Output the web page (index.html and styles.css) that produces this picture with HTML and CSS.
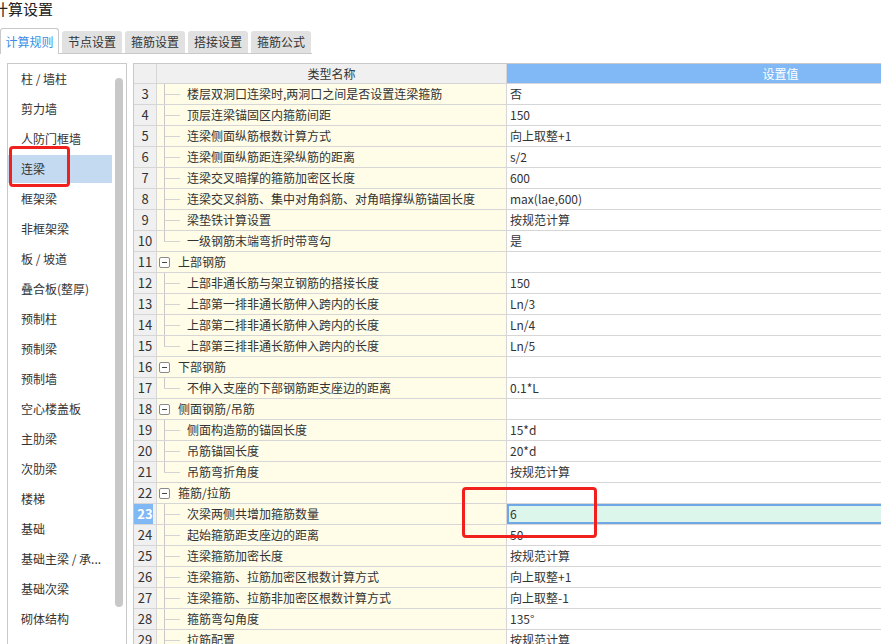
FILE: index.html
```html
<!DOCTYPE html>
<html lang="zh-CN">
<head>
<meta charset="utf-8">
<title>计算设置</title>
<link rel="stylesheet" href="styles.css">
</head>
<body>
<div class="title">计算设置</div>
<div class="tabs">
  <div class="tab active">计算规则</div>
  <div class="tab">节点设置</div>
  <div class="tab">箍筋设置</div>
  <div class="tab">搭接设置</div>
  <div class="tab">箍筋公式</div>
</div>
<div class="content">
  <div class="sidebar">
    <ul class="list">
      <li>柱 / 墙柱</li>
      <li>剪力墙</li>
      <li>人防门框墙</li>
      <li class="sel">连梁</li>
      <li>框架梁</li>
      <li>非框架梁</li>
      <li>板 / 坡道</li>
      <li>叠合板(整厚)</li>
      <li>预制柱</li>
      <li>预制梁</li>
      <li>预制墙</li>
      <li>空心楼盖板</li>
      <li>主肋梁</li>
      <li>次肋梁</li>
      <li>楼梯</li>
      <li>基础</li>
      <li>基础主梁 / 承...</li>
      <li>基础次梁</li>
      <li>砌体结构</li>
    </ul>
    <div class="scroll"><div class="thumb"></div></div>
    <div class="mark mark-side"></div>
  </div>
  <div class="grid-wrap">
    <div class="row head"><div class="c num"></div><div class="c name">类型名称</div><div class="c val">设置值</div></div>
    <div class="row"><div class="c num">3</div><div class="c name"><span class="branch"></span>楼层双洞口连梁时,两洞口之间是否设置连梁箍筋</div><div class="c val">否</div></div>
    <div class="row"><div class="c num">4</div><div class="c name"><span class="branch"></span>顶层连梁锚固区内箍筋间距</div><div class="c val">150</div></div>
    <div class="row"><div class="c num">5</div><div class="c name"><span class="branch"></span>连梁侧面纵筋根数计算方式</div><div class="c val">向上取整+1</div></div>
    <div class="row"><div class="c num">6</div><div class="c name"><span class="branch"></span>连梁侧面纵筋距连梁纵筋的距离</div><div class="c val">s/2</div></div>
    <div class="row"><div class="c num">7</div><div class="c name"><span class="branch"></span>连梁交叉暗撑的箍筋加密区长度</div><div class="c val">600</div></div>
    <div class="row"><div class="c num">8</div><div class="c name"><span class="branch"></span>连梁交叉斜筋、集中对角斜筋、对角暗撑纵筋锚固长度</div><div class="c val">max(lae,600)</div></div>
    <div class="row"><div class="c num">9</div><div class="c name"><span class="branch"></span>梁垫铁计算设置</div><div class="c val">按规范计算</div></div>
    <div class="row"><div class="c num">10</div><div class="c name"><span class="branch last"></span>一级钢筋末端弯折时带弯勾</div><div class="c val">是</div></div>
    <div class="row"><div class="c num">11</div><div class="c name group"><span class="box"></span>上部钢筋</div><div class="c val"></div></div>
    <div class="row"><div class="c num">12</div><div class="c name"><span class="branch"></span>上部非通长筋与架立钢筋的搭接长度</div><div class="c val">150</div></div>
    <div class="row"><div class="c num">13</div><div class="c name"><span class="branch"></span>上部第一排非通长筋伸入跨内的长度</div><div class="c val">Ln/3</div></div>
    <div class="row"><div class="c num">14</div><div class="c name"><span class="branch"></span>上部第二排非通长筋伸入跨内的长度</div><div class="c val">Ln/4</div></div>
    <div class="row"><div class="c num">15</div><div class="c name"><span class="branch last"></span>上部第三排非通长筋伸入跨内的长度</div><div class="c val">Ln/5</div></div>
    <div class="row"><div class="c num">16</div><div class="c name group"><span class="box"></span>下部钢筋</div><div class="c val"></div></div>
    <div class="row"><div class="c num">17</div><div class="c name"><span class="branch last"></span>不伸入支座的下部钢筋距支座边的距离</div><div class="c val">0.1*L</div></div>
    <div class="row"><div class="c num">18</div><div class="c name group"><span class="box"></span>侧面钢筋/吊筋</div><div class="c val"></div></div>
    <div class="row"><div class="c num">19</div><div class="c name"><span class="branch"></span>侧面构造筋的锚固长度</div><div class="c val">15*d</div></div>
    <div class="row"><div class="c num">20</div><div class="c name"><span class="branch"></span>吊筋锚固长度</div><div class="c val">20*d</div></div>
    <div class="row"><div class="c num">21</div><div class="c name"><span class="branch last"></span>吊筋弯折角度</div><div class="c val">按规范计算</div></div>
    <div class="row"><div class="c num">22</div><div class="c name group"><span class="box"></span>箍筋/拉筋</div><div class="c val"></div></div>
    <div class="row cur"><div class="c num">23</div><div class="c name"><span class="branch"></span>次梁两侧共增加箍筋数量</div><div class="c val">6</div></div>
    <div class="row"><div class="c num">24</div><div class="c name"><span class="branch"></span>起始箍筋距支座边的距离</div><div class="c val">50</div></div>
    <div class="row"><div class="c num">25</div><div class="c name"><span class="branch"></span>连梁箍筋加密长度</div><div class="c val">按规范计算</div></div>
    <div class="row"><div class="c num">26</div><div class="c name"><span class="branch"></span>连梁箍筋、拉筋加密区根数计算方式</div><div class="c val">向上取整+1</div></div>
    <div class="row"><div class="c num">27</div><div class="c name"><span class="branch"></span>连梁箍筋、拉筋非加密区根数计算方式</div><div class="c val">向上取整-1</div></div>
    <div class="row"><div class="c num">28</div><div class="c name"><span class="branch"></span>箍筋弯勾角度</div><div class="c val">135°</div></div>
    <div class="row"><div class="c num">29</div><div class="c name"><span class="branch"></span>拉筋配置</div><div class="c val">按规范计算</div></div>
    <div class="mark mark-grid"></div>
  </div>
</div>
</body>
</html>
```
FILE: styles.css
```css
html, body {
  margin: 0;
  padding: 0;
  background: #fff;
}
body {
  width: 881px;
  height: 644px;
  overflow: hidden;
  font-family: "Noto Sans CJK SC", "Microsoft YaHei", sans-serif;
  font-size: 12px;
  color: #333;
}

.title {
  height: 18px;
  line-height: 18px;
  font-size: 15px;
  margin-left: -7px;
  color: #222;
}

.tabs {
  display: flex;
  align-items: flex-end;
  gap: 3px;
  margin-top: 10px;
  width: 312px;
  height: 25px;
  border-bottom: 1px solid #c9c9c9;
}
.tab {
  box-sizing: border-box;
  width: 60px;
  height: 22px;
  line-height: 21px;
  text-align: center;
  background: #e1e1e1;
  border-radius: 3px 3px 0 0;
  color: #333;
}
.tab.active {
  width: 59px;
  height: 26px;
  line-height: 26px;
  margin-bottom: -1px;
  background: #fff;
  border: 1px solid #c9c9c9;
  border-bottom: none;
  border-radius: 3px 3px 0 0;
  color: #3a8ee6;
}

.content {
  display: flex;
  margin-top: 9px;
}

.sidebar {
  position: relative;
  display: flex;
  flex: none;
  box-sizing: border-box;
  width: 120px;
  height: 600px;
  margin-left: 7px;
  border: 1px solid #c9c9c9;
}
.list {
  list-style: none;
  margin: 0;
  padding: 0;
  width: 104px;
}
.list li {
  height: 28px;
  line-height: 28px;
  margin: 1px 0;
  padding-left: 13px;
  white-space: nowrap;
  overflow: hidden;
}
.list li + li {
  margin-top: 2px;
}
.list li.sel {
  background: #c4daf1;
}
.scroll {
  width: 14px;
  padding-top: 14px;
}
.thumb {
  width: 8px;
  height: 529px;
  margin-left: 3px;
  background: #c8c8c8;
  border-radius: 4px;
}

.mark {
  position: absolute;
  box-sizing: border-box;
  border: 3px solid #f0201c;
  border-radius: 4px;
}
.mark-side {
  left: 1px;
  top: 82px;
  width: 61px;
  height: 41px;
}
.mark-grid {
  left: 328px;
  top: 423px;
  width: 135px;
  height: 51px;
}

.grid-wrap {
  position: relative;
  flex: none;
  margin-left: 6px;
  border-left: 1px solid #c9c9c9;
  border-top: 1px solid #c9c9c9;
}
.row {
  display: flex;
  height: 21px;
}
.c {
  box-sizing: border-box;
  height: 21px;
  line-height: 20px;
  border-right: 1px solid #d6d6d6;
  border-bottom: 1px solid #d6d6d6;
  white-space: nowrap;
  overflow: hidden;
}
.num {
  width: 23px;
  background: #f0f0f0;
  text-align: center;
  font-size: 13px;
}
.name {
  display: flex;
  align-items: center;
  width: 350px;
  padding-left: 7px;
  background: #fffde8;
}
.val {
  width: 548px;
  padding-left: 3px;
  background: #fff;
}

.head {
  height: 20px;
}
.head .c {
  height: 20px;
  line-height: 19px;
}
.head .name {
  justify-content: center;
  padding-left: 0;
  background: #f0f0f0;
}
.head .val {
  padding-left: 0;
  text-align: center;
  background: #80b9f6;
  color: #fff;
}

.branch {
  align-self: stretch;
  flex: none;
  width: 16px;
  margin-right: 7px;
  background:
    linear-gradient(#c8c8c8, #c8c8c8) 0 0 / 1px 100% no-repeat,
    linear-gradient(#d4d4d4, #d4d4d4) 0 50% / 100% 1px no-repeat;
}
.branch.last {
  background:
    linear-gradient(#c8c8c8, #c8c8c8) 0 0 / 1px 50% no-repeat,
    linear-gradient(#d4d4d4, #d4d4d4) 0 50% / 100% 1px no-repeat;
}

.group {
  padding-left: 2px;
}
.box {
  flex: none;
  box-sizing: border-box;
  width: 11px;
  height: 11px;
  margin-right: 8px;
  border: 1px solid #8a8a8a;
  border-radius: 2px;
  background: linear-gradient(#444, #444) center / 5px 1px no-repeat, #fff;
}

.cur .num {
  background: linear-gradient(to right, #7fb8f5 19px, #f0f0f0 19px);
  color: #fff;
  font-weight: bold;
}
.cur .val {
  background: #dcf6ec;
  box-shadow: inset 0 0 0 2px #6ea8e6;
}
```
